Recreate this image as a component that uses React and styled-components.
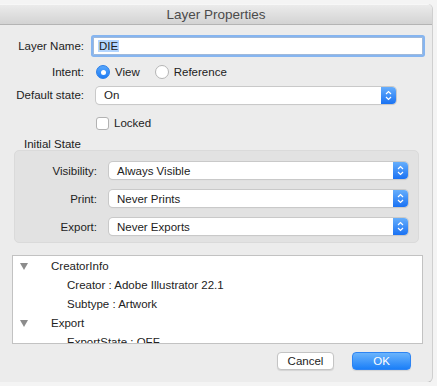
import styled, { createGlobalStyle } from "styled-components";

const GlobalStyle = createGlobalStyle`
  body {
    margin: 0;
    background: #f4f4f4;
    font-family: "Liberation Sans", Arial, sans-serif;
    font-size: 11.5px;
    color: #222;
  }
`;

const Window = styled.div`
  width: 432px;
  height: 378px;
  margin-top: 4px;
  background: #ececec;
  border-radius: 0 5px 5px 0;
  box-shadow: 1px 0 0 #cfcfcf, 0 1px 0 #a9a9a9;
  display: flex;
  flex-direction: column;
  overflow: hidden;
`;

const TitleBar = styled.div`
  height: 21px;
  flex-shrink: 0;
  display: flex;
  align-items: center;
  justify-content: center;
  background: linear-gradient(#ebebeb, #d3d3d3);
  border-top: 1px solid #f7f7f7;
  border-bottom: 1px solid #b4b4b4;
  box-sizing: border-box;
  font-size: 13.5px;
  color: #4b4b4b;
`;

const Form = styled.div`
  display: grid;
  grid-template-columns: 84px 1fr;
  grid-template-rows: 34px 18px 28px 28px;
  column-gap: 12px;
  align-items: center;
  margin-top: 4px;
  padding-right: 9px;
`;

const Label = styled.div`
  text-align: right;
  white-space: nowrap;
`;

const TextField = styled.div`
  height: 18px;
  margin-left: -3px;
  box-sizing: border-box;
  background: #fff;
  border: 1px solid #9fb9db;
  box-shadow: 0 0 0 2px #86b5f0;
  border-radius: 1px;
  display: flex;
  align-items: center;
  padding-left: 4px;
`;

const Highlight = styled.span`
  background: #b3d5fe;
  padding: 0 1px;
`;

const Choices = styled.div`
  display: flex;
  align-items: center;
  gap: 5px;
`;

const Radio = styled.span`
  width: 14px;
  height: 14px;
  box-sizing: border-box;
  border-radius: 50%;
  display: inline-flex;
  align-items: center;
  justify-content: center;
  background: ${(p) => (p.$on ? "linear-gradient(#57a6fc, #1f7cf4)" : "#fff")};
  border: 1px solid ${(p) => (p.$on ? "#2a7ee8" : "#b5b5b5")};
  &::after {
    content: "";
    width: 5px;
    height: 5px;
    border-radius: 50%;
    background: #fff;
    display: ${(p) => (p.$on ? "block" : "none")};
  }
`;

const ChoiceText = styled.span`
  margin-right: 10px;
`;

const Check = styled.span`
  width: 13px;
  height: 13px;
  box-sizing: border-box;
  border: 1px solid #b2b2b2;
  border-radius: 3px;
  background: #fff;
`;

const SelectBox = styled.div`
  height: 17px;
  width: ${(p) => p.$width}px;
  box-sizing: border-box;
  background: #fff;
  border-radius: 4px;
  box-shadow: 0 0 0 1px #c9c9c9, 0 1px 1px rgba(0, 0, 0, 0.12);
  display: flex;
  align-items: center;
  padding-left: 8px;
  overflow: hidden;
`;

const SelectText = styled.span`
  flex: 1;
`;

const Stepper = styled.span`
  width: 15px;
  height: 100%;
  background: linear-gradient(#66aefc, #1a72f3);
  display: flex;
  align-items: center;
  justify-content: center;
`;

const SectionTitle = styled.div`
  margin-left: 24px;
  height: 13px;
  line-height: 14px;
`;

const Group = styled.div`
  margin: 0 13px 0 14px;
  background: #e2e2e2;
  border: 1px solid #dadada;
  border-radius: 5px;
  box-sizing: border-box;
  height: 93px;
  padding: 11px 10px 0 0;
  display: grid;
  grid-template-columns: 82px 1fr;
  grid-auto-rows: 17px;
  column-gap: 12px;
  row-gap: 11px;
  align-items: center;
`;

const Tree = styled.div`
  margin: 12px 9px 0 12px;
  height: 89px;
  box-sizing: border-box;
  background: #fff;
  border: 1px solid #c2c2c2;
  overflow: hidden;
`;

const TreeRow = styled.div`
  height: 19px;
  display: flex;
  align-items: center;
  padding-left: ${(p) => (p.$level ? 54 : 7)}px;
`;

const Disclosure = styled.span`
  width: 0;
  height: 0;
  border-left: 4px solid transparent;
  border-right: 4px solid transparent;
  border-top: 7px solid #8c8c8c;
  margin-right: 23px;
  margin-top: 2px;
`;

const Footer = styled.div`
  margin-top: 8px;
  padding-right: 21px;
  display: flex;
  justify-content: flex-end;
  gap: 18px;
`;

const Button = styled.button`
  height: 18px;
  width: ${(p) => (p.$primary ? 59 : 57)}px;
  padding: 0;
  font-family: inherit;
  font-size: 11.5px;
  border-radius: 4px;
  border: ${(p) => (p.$primary ? "1px solid #2d84f3" : "1px solid #c4c4c4")};
  background: ${(p) => (p.$primary ? "linear-gradient(#6bb4fc, #1b7ff8)" : "#fff")};
  color: ${(p) => (p.$primary ? "#fff" : "#222")};
  box-shadow: 0 1px 1px rgba(0, 0, 0, 0.1);
`;

function Chevrons() {
  return (
    <svg width="7" height="11" viewBox="0 0 7 11">
      <path d="M1 4 L3.5 1.5 L6 4 M1 7 L3.5 9.5 L6 7" stroke="#fff" strokeWidth="1.2" fill="none" />
    </svg>
  );
}

function Select({ value, width }) {
  return (
    <SelectBox $width={width}>
      <SelectText>{value}</SelectText>
      <Stepper>
        <Chevrons />
      </Stepper>
    </SelectBox>
  );
}

const tree = [
  { text: "CreatorInfo", level: 0 },
  { text: "Creator : Adobe Illustrator 22.1", level: 1 },
  { text: "Subtype : Artwork", level: 1 },
  { text: "Export", level: 0 },
  { text: "ExportState : OFF", level: 1 },
];

export default function App() {
  return (
    <>
      <GlobalStyle />
      <Window>
        <TitleBar>Layer Properties</TitleBar>
        <Form>
          <Label>Layer Name:</Label>
          <TextField>
            <Highlight>DIE</Highlight>
          </TextField>
          <Label>Intent:</Label>
          <Choices>
            <Radio $on />
            <ChoiceText>View</ChoiceText>
            <Radio />
            <ChoiceText>Reference</ChoiceText>
          </Choices>
          <Label>Default state:</Label>
          <Select value="On" width={300} />
          <span />
          <Choices>
            <Check />
            <span>Locked</span>
          </Choices>
        </Form>
        <SectionTitle>Initial State</SectionTitle>
        <Group>
          <Label>Visibility:</Label>
          <Select value="Always Visible" width={299} />
          <Label>Print:</Label>
          <Select value="Never Prints" width={299} />
          <Label>Export:</Label>
          <Select value="Never Exports" width={299} />
        </Group>
        <Tree>
          {tree.map((row) => (
            <TreeRow key={row.text} $level={row.level}>
              {row.level === 0 && <Disclosure />}
              {row.text}
            </TreeRow>
          ))}
        </Tree>
        <Footer>
          <Button>Cancel</Button>
          <Button $primary>OK</Button>
        </Footer>
      </Window>
    </>
  );
}
